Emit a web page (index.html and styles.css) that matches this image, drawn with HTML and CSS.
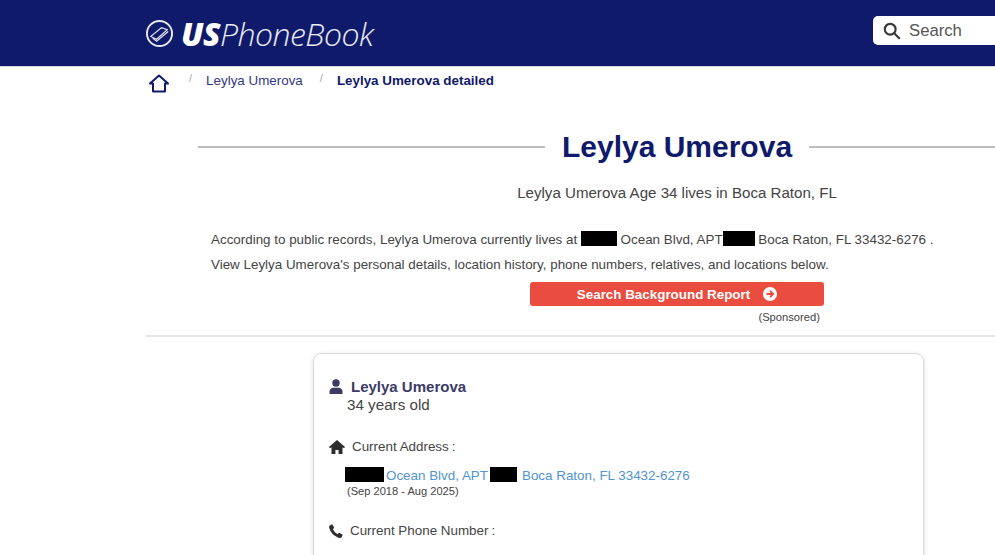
FILE: index.html
```html
<!DOCTYPE html>
<html lang="en">
<head>
    <meta charset="UTF-8">
    <meta name="viewport" content="width=device-width, initial-scale=1.0">
    <title>Leylya Umerova</title>
    <link rel="stylesheet" href="styles.css">
</head>
<body>
    <header class="topbar">
        <div class="logo">
            <svg class="logo-mark" viewBox="0 0 30 30" width="29" height="29" fill="none" stroke="#e6e8f2">
                <circle cx="15" cy="15" r="13" stroke-width="2"/>
                <path d="M6 18 L17 9 L23 11 L12 21 Z" stroke-width="1.2"/>
                <path d="M8 20 L12 23 L24 13" stroke-width="1.2"/>
            </svg>
            <span class="logo-text"><b>US</b>PhoneBook</span>
        </div>
        <div class="search">
            <svg viewBox="0 0 20 20" width="18" height="18" fill="none" stroke="#3a3a3a" stroke-width="2.4">
                <circle cx="8" cy="8" r="6"/>
                <path d="M12.5 12.5 L18 18" stroke-linecap="round"/>
            </svg>
            <span>Search</span>
        </div>
    </header>

    <nav class="crumbs">
        <svg class="crumb-home" viewBox="0 0 20 19" width="20" height="19" fill="none" stroke="#101a6b" stroke-width="2" stroke-linejoin="round">
            <path d="M1 9.5 L10 1.5 L19 9.5 H16 V17.5 H4 V9.5 Z"/>
        </svg>
        <span class="sep">/</span>
        <a class="crumb">Leylya Umerova</a>
        <span class="sep">/</span>
        <a class="crumb current">Leylya Umerova detailed</a>
    </nav>

    <main class="content">
        <div class="title-row">
            <h1>Leylya Umerova</h1>
        </div>
        <p class="subtitle">Leylya Umerova Age 34 lives in Boca Raton, FL</p>
        <div class="intro">
            <p>According to public records, Leylya Umerova currently lives at <i class="redact r36"></i> Ocean Blvd, APT<i class="redact r32"></i> Boca Raton, FL 33432-6276 .</p>
            <p>View Leylya Umerova's personal details, location history, phone numbers, relatives, and locations below.</p>
        </div>
        <div class="report">
            <a class="report-btn">Search Background Report
                <svg viewBox="0 0 14 14" width="14" height="14">
                    <circle cx="7" cy="7" r="7" fill="#fff"/>
                    <path d="M3.5 7 H10 M7 3.8 L10.2 7 L7 10.2" fill="none" stroke="#ea4c3f" stroke-width="1.8"/>
                </svg>
            </a>
            <small>(Sponsored)</small>
        </div>
        <hr class="divider">

        <section class="card">
            <div class="person">
                <svg viewBox="0 0 14 15" width="14" height="15" fill="#3b3b66">
                    <circle cx="7" cy="4" r="3.7"/>
                    <path d="M0.5 15 V12.5 C0.5 10 2.5 8.7 4.5 8.7 H9.5 C11.5 8.7 13.5 10 13.5 12.5 V15 Z"/>
                </svg>
                <strong>Leylya Umerova</strong>
            </div>
            <div class="age">34 years old</div>

            <div class="label home-label">
                <svg viewBox="0 0 16 14" width="16" height="14" fill="#2d2d2d">
                    <path d="M8 0 L16 7 L15 8.3 L13.5 7.2 V14 H9.6 V10 H6.4 V14 H2.5 V7.2 L1 8.3 L0 7 Z"/>
                </svg>
                <span>Current Address<span class="colon">:</span></span>
            </div>
            <div class="address">
                <i class="redact r39"></i><a>Ocean Blvd, APT</a><i class="redact r27 gap"></i><a class="city">Boca Raton, FL 33432-6276</a>
            </div>
            <small class="dates">(Sep 2018 - Aug 2025)</small>

            <div class="label phone-label">
                <svg viewBox="0 0 14 14" width="14" height="14" fill="#2d2d2d">
                    <path d="M3.2 0.3 L5.2 3.8 L3.9 5.3 C4.6 7 6.6 9.2 8.7 10.1 L10.2 8.7 L13.7 10.8 L12.6 13.2 C12.2 13.8 11.5 14 10.8 13.9 C5.8 13 1 8.2 0.1 3.2 C0 2.5 0.2 1.8 0.8 1.4 Z"/>
                </svg>
                <span>Current Phone Number<span class="colon">:</span></span>
            </div>
        </section>
    </main>
</body>
</html>
```

FILE: styles.css
```css
html, body {
    margin: 0;
    height: 555px;
    overflow: hidden;
}
body {
    width: 995px;
    background: #fff;
    font-family: "Liberation Sans", Arial, sans-serif;
    font-size: 13.4px;
    color: #444;
}

.topbar {
    height: 66px;
    background: #101a6b;
    border-bottom: 1px solid #d5d6e3;
    display: flex;
    align-items: center;
    padding-left: 145px;
    overflow: hidden;
}
.logo {
    display: flex;
    align-items: center;
    gap: 7px;
}
.logo-text {
    font-family: "Open Sans", "Liberation Sans", sans-serif;
    font-size: 32px;
    font-style: italic;
    font-weight: 300;
    letter-spacing: -0.5px;
    color: #e9eaf3;
}
.logo-text b {
    font-weight: 800;
    color: #fff;
}
.search {
    align-self: flex-start;
    margin: 16px -8px 0 auto;
    flex: none;
    width: 130px;
    height: 29px;
    box-sizing: border-box;
    background: #fff;
    border-radius: 5px 0 0 5px;
    display: flex;
    align-items: center;
    gap: 8px;
    padding-left: 10px;
    font-size: 16.7px;
    color: #555;
}

.crumbs {
    height: 34px;
    display: flex;
    align-items: flex-start;
    padding-left: 149px;
    font-size: 13.4px;
    color: #101a6b;
}
.crumb-home {
    margin: 7px 3px 0 0;
}
.sep {
    margin: 5px 14px 0 17px;
    font-size: 11px;
    color: #aaa;
}
.sep + .crumb {
    margin-top: 6px;
}
.crumb {
    color: #33397f;
}
.crumb.current {
    font-weight: bold;
    color: #101a6b;
}

.content {
    width: 1062px;
    margin-left: 146px;
}
.title-row {
    display: flex;
    align-items: center;
    gap: 17px;
    margin: 27px 52px 0;
}
.title-row::before,
.title-row::after {
    content: "";
    flex: 1;
    border-top: 2px solid #bdbdbd;
}
h1 {
    margin: 0;
    font-size: 30px;
    line-height: 38px;
    color: #101a6b;
}
.subtitle {
    margin: 17px 0 0;
    text-align: center;
    font-size: 15.1px;
    line-height: 20px;
}
.intro {
    margin: 24px 0 0 65px;
    line-height: 25px;
}
.intro p {
    margin: 0;
    white-space: nowrap;
}
.redact {
    display: inline-block;
    height: 15px;
    background: #000;
    vertical-align: -2px;
}
.r36 { width: 36px; }
.r32 { width: 32px; }
.r39 { width: 39px; }
.r27 { width: 27px; }

.report {
    width: 294px;
    margin: 5px auto 0;
    display: flex;
    flex-direction: column;
}
.report-btn {
    height: 24px;
    background: #ea4c3f;
    border-radius: 3px;
    display: flex;
    align-items: center;
    justify-content: center;
    gap: 13px;
    font-size: 13.4px;
    font-weight: bold;
    color: #fff;
}
.report small {
    align-self: flex-end;
    margin: 5px 4px 0 0;
    font-size: 11.2px;
    line-height: 13px;
}
.divider {
    margin: 11px 0 0;
    border: 0;
    border-top: 2px solid #e6e6e6;
}

.card {
    width: 611px;
    height: 260px;
    margin: 16px 0 0 167px;
    box-sizing: border-box;
    padding: 24px 15px 0;
    border: 1px solid #d8d8d8;
    border-radius: 8px;
    box-shadow: 0 1px 5px rgba(0, 0, 0, 0.12);
}
.person {
    display: flex;
    align-items: center;
    gap: 8px;
    font-size: 15px;
    line-height: 17px;
    color: #3b3b66;
}
.age {
    margin: 1px 0 0 18px;
    font-size: 15.2px;
    line-height: 17px;
}
.colon {
    margin-left: 3px;
}
.label {
    display: flex;
    align-items: center;
    gap: 7px;
    line-height: 17px;
}
.home-label {
    margin-top: 25px;
}
.address {
    margin: 12px 0 0 16px;
    line-height: 17px;
    color: #4f94d4;
    white-space: nowrap;
}
.address .redact {
    margin-right: 2px;
}
.address .gap {
    margin-left: 2px;
}
.city {
    margin-left: 3px;
}
.dates {
    display: block;
    margin: 1px 0 0 18px;
    font-size: 11.1px;
    line-height: 13px;
}
.phone-label {
    margin-top: 24px;
}
```
